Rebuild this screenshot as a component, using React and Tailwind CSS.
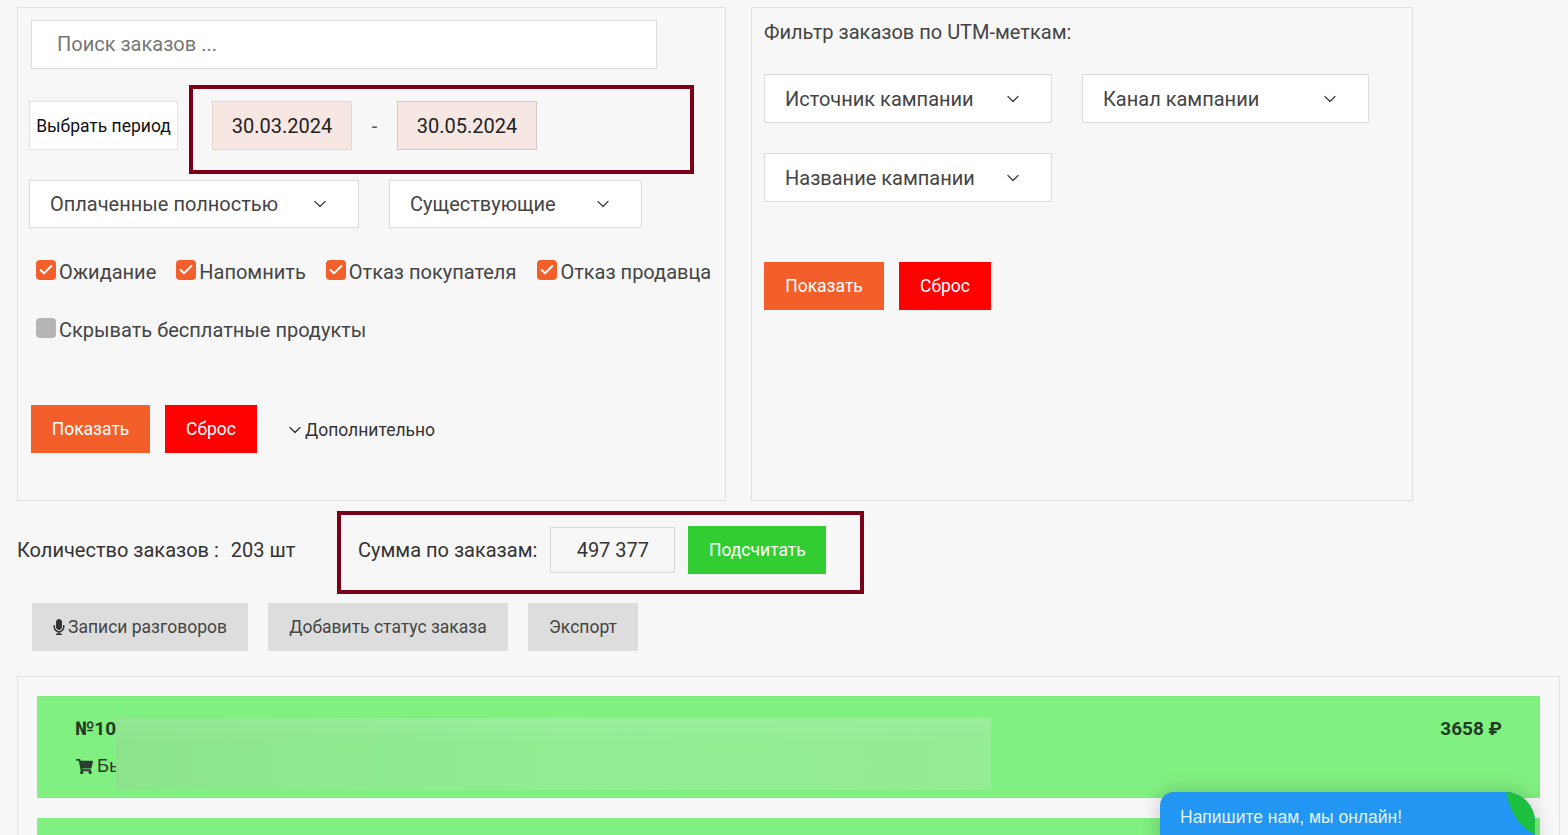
import { ChevronDown, Check } from 'lucide-react';
import { FaMicrophone, FaShoppingCart } from 'react-icons/fa';

function Select({ label, width, gap }) {
  return (
    <div className={`${width} h-[49px] bg-white border border-[#dcdcdc] flex items-center justify-between pl-5 ${gap} text-[20px] text-[#444]`}>
      <span>{label}</span>
      <ChevronDown size={20} strokeWidth={1.6} className="text-[#444]" />
    </div>
  );
}

function Checkbox({ label, checked = true }) {
  return (
    <label className="flex items-center gap-[3px] text-[20px] leading-6 text-[#444]">
      <span className={`w-5 h-5 -mt-1 rounded-[4px] flex items-center justify-center ${checked ? 'bg-[#f35f2a]' : 'bg-[#b5b5b5]'}`}>
        {checked && <Check size={16} strokeWidth={3} className="text-white" />}
      </span>
      {label}
    </label>
  );
}

function ActionButtons({ showWidth, resetWidth }) {
  return (
    <div className="flex gap-[15px]">
      <button className={`${showWidth} h-12 bg-[#f35f2a] text-white text-[17.5px]`}>Показать</button>
      <button className={`${resetWidth} h-12 bg-[#ff0000] text-white text-[17.5px]`}>Сброс</button>
    </div>
  );
}

export default function App() {
  return (
    <div className="relative h-[835px] overflow-hidden bg-[#f7f7f7] pl-[17px] pt-[7px] font-['Roboto',sans-serif] text-[#333]">
      <div className="flex gap-[25px]">
        {/* заказы */}
        <div className="w-[709px] h-[494px] border border-[#dfdfdf] pt-3 pl-[11px]">
          <div className="ml-[2px] w-[626px] h-[49px] bg-white border border-[#dcdcdc] flex items-center pl-[25px] pb-[2px] text-[20px] text-[#777]">
            Поиск заказов ...
          </div>

          <div className="flex items-start gap-[11px] mt-4">
            <div className="w-[149px] h-[49px] mt-4 pt-[1px] bg-white border border-[#e2e2e2] flex items-center justify-center text-[17.5px] text-[#111]">
              Выбрать период
            </div>
            <div className="w-[505px] h-[89px] border-4 border-[#7a0019] pl-[19px] pt-3 text-[20px] text-[#222]">
              <div className="flex items-center">
                <div className="w-[140px] h-[49px] bg-[#f7e7e2] border border-[#e3d6d1] flex items-center justify-center">30.03.2024</div>
                <div className="w-[45px] text-center text-[#555]">-</div>
                <div className="w-[140px] h-[49px] bg-[#f7e7e2] border border-[#d9c9c3] flex items-center justify-center">30.05.2024</div>
              </div>
            </div>
          </div>

          <div className="flex gap-[30px] mt-[6px] [&>div]:h-12">
            <Select label="Оплаченные полностью" width="w-[330px]" gap="pr-[28px]" />
            <Select label="Существующие" width="w-[253px]" gap="pr-[28px]" />
          </div>

          <div className="flex gap-5 mt-8 pl-[7px]">
            <Checkbox label="Ожидание" />
            <Checkbox label="Напомнить" />
            <Checkbox label="Отказ покупателя" />
            <div className="ml-[1px]">
              <Checkbox label="Отказ продавца" />
            </div>
          </div>
          <div className="flex mt-[34px] pl-[7px]">
            <Checkbox label="Скрывать бесплатные продукты" checked={false} />
          </div>

          <div className="flex items-center mt-[63px] ml-[2px]">
            <ActionButtons showWidth="w-[119px]" resetWidth="w-[92px]" />
            <div className="flex items-center ml-[28px] pt-[2px] text-[17.5px] text-[#333]">
              <ChevronDown size={20} strokeWidth={1.6} />
              Дополнительно
            </div>
          </div>
        </div>

        {/* utm */}
        <div className="w-[662px] h-[494px] border border-[#dfdfdf] pl-3 pt-3">
          <div className="text-[20px] leading-6 text-[#444]">Фильтр заказов по UTM-меткам:</div>
          <div className="flex gap-[30px] mt-[30px]">
            <Select label="Источник кампании" width="w-[288px]" gap="pr-[28px]" />
            <Select label="Канал кампании" width="w-[287px]" gap="pr-[28px]" />
          </div>
          <div className="mt-[30px]">
            <Select label="Название кампании" width="w-[288px]" gap="pr-[28px]" />
          </div>
          <div className="mt-[60px]">
            <ActionButtons showWidth="w-[120px]" resetWidth="w-[92px]" />
          </div>
        </div>
      </div>

      <div className="flex items-center mt-[10px] text-[20px]">
        <div className="w-[320px] pb-[5px] whitespace-pre text-[#333]">Количество заказов :  <span className="ml-[2px]">203 шт</span></div>
        <div className="w-[527px] h-[83px] border-4 border-[#7a0019] flex items-center pl-[17px] pb-[5px]">
          <span className="text-[#333]">Сумма по заказам:</span>
          <div className="w-[125px] h-[46px] ml-[13px] bg-[#f7f7f7] border border-[#d8d8d8] flex items-center justify-center text-[#333]">497 377</div>
          <button className="w-[138px] h-12 ml-[13px] bg-[#32cd32] text-white text-[17.5px]">Подсчитать</button>
        </div>
      </div>

      <div className="flex gap-5 mt-[9px] ml-[15px] text-[17.5px] text-[#444]">
        <button className="w-[216px] h-12 pr-[2px] bg-[#dddddd] flex items-center justify-center gap-[1px]">
          <FaMicrophone size={16} className="text-[#333]" />
          Записи разговоров
        </button>
        <button className="w-[240px] h-12 bg-[#dddddd]">Добавить статус заказа</button>
        <button className="w-[110px] h-12 bg-[#dddddd]">Экспорт</button>
      </div>

      <div className="w-[1543px] mt-[25px] border border-[#e2e2e2] px-[19px] pt-[19px] pb-5">
        <div className="h-[102px] bg-[#80f080] border border-[#84e884] px-[37px] pt-5">
          <div className="flex justify-between text-[19px] leading-6 font-bold text-[#223a26]">
            <span>№10</span>
            <span>3658 ₽</span>
          </div>
          <div className="flex items-center gap-1 mt-[13px] pl-[1px] text-[19px] leading-6 text-[#2c3c2e]">
            <FaShoppingCart size={17} />
            <span>Бы</span>
          </div>
        </div>
        <div className="h-[102px] mt-5 bg-[#80f080]" />
      </div>

      {/* размытая часть */}
      <div className="absolute left-[116px] top-[718px] w-[875px] h-[72px] bg-[linear-gradient(180deg,rgba(255,255,255,0.08),rgba(255,255,255,0)_35%),linear-gradient(90deg,#8be48b,#91ee93_50%,#94ec94)]" />

      {/* чат */}
      <div className="absolute left-[1160px] top-[792px] w-[375px] h-[60px] bg-[#2196f3] rounded-tl-[14px] rounded-tr-[30px] overflow-hidden shadow-[0_0_20px_rgba(0,0,0,0.2)] pl-5 pt-[13px] font-['Liberation_Sans',sans-serif] text-[17.5px] leading-6 text-[#e3f2fd]">
        Напишите нам, мы онлайн!
        <svg className="absolute right-0 top-0" width="30" height="44" viewBox="0 0 30 44">
          <path d="M1 0 L30 0 L30 42 C18 38 6 24 1 0 Z" fill="#1dbf3f" />
        </svg>
      </div>
    </div>
  );
}
